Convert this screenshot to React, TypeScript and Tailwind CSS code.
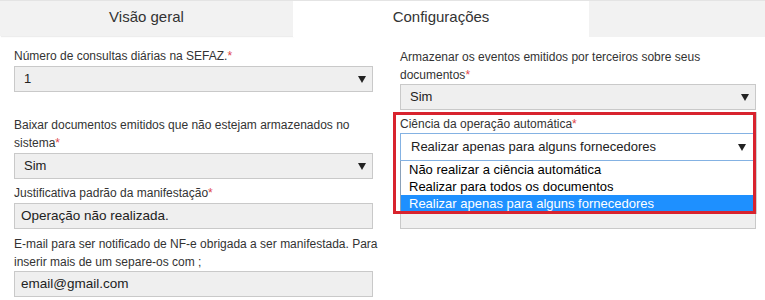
import type { ReactNode } from "react";

function Arrow() {
  return (
    <svg width="8" height="7" viewBox="0 0 8 7" aria-hidden="true">
      <path d="M0 0h8L4 7z" fill="#222" />
    </svg>
  );
}

function Label({ children, className = "" }: { children: ReactNode; className?: string }) {
  return (
    <div className={`text-[12px] leading-[18px] text-[#333] ${className}`}>
      {children}
      <span className="text-[#e0454a]">*</span>
    </div>
  );
}

function Select({ value, className = "" }: { value: string; className?: string }) {
  return (
    <div
      className={`flex h-[26px] items-center justify-between border border-[#c9c9c9] bg-[#efefef] pl-[9px] pr-[6px] text-[13px] text-[#222] ${className}`}
    >
      <span>{value}</span>
      <Arrow />
    </div>
  );
}

function Input({ value, className = "" }: { value: string; className?: string }) {
  return (
    <div
      className={`flex h-[26px] items-center border border-[#c9c9c9] bg-[#efefef] pl-[6px] text-[13.5px] text-[#222] ${className}`}
    >
      {value}
    </div>
  );
}

const options = [
  "Não realizar a ciência automática",
  "Realizar para todos os documentos",
  "Realizar apenas para alguns fornecedores",
];

export default function App() {
  return (
    <div className="h-[300px] w-[765px] overflow-hidden bg-white font-['Liberation_Sans',Arial,sans-serif]">
      {/* tabs */}
      <div className="flex h-[37px] items-start border-t border-[#e4e4e4]">
        <div className="h-[35px] w-[293px] bg-[#f2f2f2] pt-[5px] text-center text-[15px] text-[#333] shadow-[1px_1px_1px_rgba(0,0,0,0.07)]">
          Visão geral
        </div>
        <div className="h-[36px] w-[296px] bg-white pt-[5px] text-center text-[15px] text-[#333]">
          Configurações
        </div>
        <div className="h-[36px] flex-1 bg-[#f2f2f2]" />
      </div>

      <div className="flex pl-[14px]">
        {/* left column */}
        <div className="w-[380px]">
          <Label className="mt-[10px]">Número de consultas diárias na SEFAZ.</Label>
          <Select value="1" className="mt-[1px] w-[359px]" />

          <Label className="mt-[24px]">
            Baixar documentos emitidos que não estejam armazenados no sistema
          </Label>
          <Select value="Sim" className="mt-[1px] w-[359px]" />

          <Label className="mt-[5px]">Justificativa padrão da manifestação</Label>
          <Input value="Operação não realizada." className="mt-[1px] w-[359px]" />

          <div className="mt-[6px] text-[12px] leading-[18px] text-[#333]">
            E-mail para ser notificado de NF-e obrigada a ser manifestada. Para inserir mais de um
            separe-os com ;
          </div>
          <Input value="email@gmail.com" className="w-[359px]" />
        </div>

        {/* right column */}
        <div className="ml-[6px] w-[356px]">
          <Label className="mt-[11px]">
            Armazenar os eventos emitidos por terceiros sobre seus documentos
          </Label>
          <Select value="Sim" />

          <div className="relative mt-[5px]">
            <Label>Ciência da operação automática</Label>
            <div className="flex h-[28px] items-center justify-between border border-[#84b2e3] bg-white pl-[10px] pr-[9px] text-[13px] text-[#222]">
              <span>Realizar apenas para alguns fornecedores</span>
              <Arrow />
            </div>

            {/* open dropdown list */}
            <div className="absolute left-0 right-0 top-full z-10 border-x border-b border-[#8aa0b8] bg-white">
              {options.map((o, i) => (
                <div
                  key={o}
                  className={`h-[17px] pl-[8px] text-[13px] leading-[17px] ${
                    i === 2 ? "bg-[#1e90ff] text-white" : "text-black"
                  }`}
                >
                  {o}
                </div>
              ))}
            </div>

            {/* red highlight frame */}
            <div className="pointer-events-none absolute left-[-7px] top-[-3px] z-20 h-[102px] w-[363px] border-[3px] border-[#d8232e] shadow-[1px_0_0_#cfcfcf]" />
          </div>

          <Input value="" className="mt-[42px]" />
        </div>
      </div>
    </div>
  );
}
